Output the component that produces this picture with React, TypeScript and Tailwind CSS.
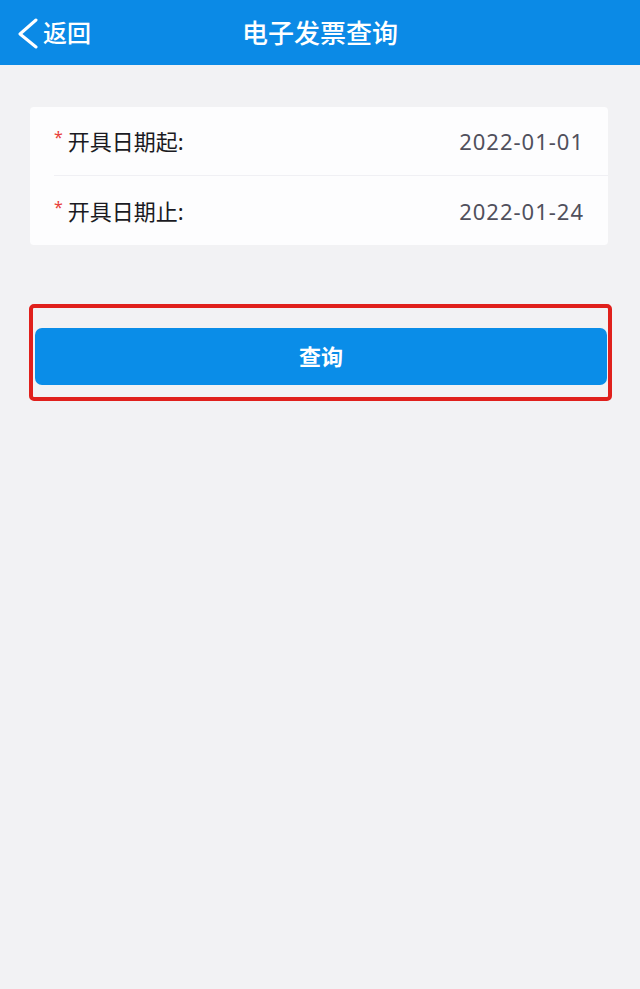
export default function App() {
  const rows = [
    { label: '开具日期起:', value: '2022-01-01' },
    { label: '开具日期止:', value: '2022-01-24' },
  ]

  return (
    <div
      className="min-h-[989px] w-full bg-[#f2f2f4]"
      style={{ fontFamily: '"Noto Sans", "Noto Sans CJK SC", sans-serif' }}
    >
      {/* 顶部栏 */}
      <div className="relative flex h-[65px] items-center justify-center bg-[#0b8ae6]">
        <div className="absolute left-[16px] top-0 flex h-full items-center">
          <svg width="24" height="32" viewBox="0 0 24 32" fill="none" className="mr-[3px]">
            <polyline
              points="20,3 4,17 20,30"
              stroke="#ffffff"
              strokeWidth="3"
              strokeLinecap="round"
              strokeLinejoin="round"
            />
          </svg>
          <span className="text-[24px] font-medium leading-none text-white">返回</span>
        </div>
        <h1 className="text-[26px] font-medium leading-none text-white">电子发票查询</h1>
      </div>

      {/* 日期 */}
      <div className="ml-[30px] mr-[32px] mt-[42px] rounded-[4px] bg-[#fdfdfe]">
        {rows.map((r, i) => (
          <div
            key={r.label}
            className={`ml-[24px] flex h-[69px] items-center justify-between pr-[24px] ${
              i === 0 ? 'border-b border-[#f0f0f4]' : ''
            }`}
          >
            <div className="flex items-center">
              <span className="mr-[5px] -mt-[8px] text-[16px] leading-none text-[#e8403a]">*</span>
              <span className="text-[22px] leading-none text-[#1a1a22]">{r.label}</span>
            </div>
            <span className="text-[22px] leading-none tracking-[1px] text-[#50505c]">{r.value}</span>
          </div>
        ))}
      </div>

      {/* 查询 */}
      <div className="ml-[29px] mr-[28px] mt-[59px] rounded-[5px] border-4 border-[#e0201c] pb-[12px] pl-[2px] pr-[1px] pt-[20px]">
        <button className="flex h-[57px] w-full items-center justify-center rounded-[7px] bg-[#0a8de8] text-[22px] font-bold text-white">
          查询
        </button>
      </div>
    </div>
  )
}
